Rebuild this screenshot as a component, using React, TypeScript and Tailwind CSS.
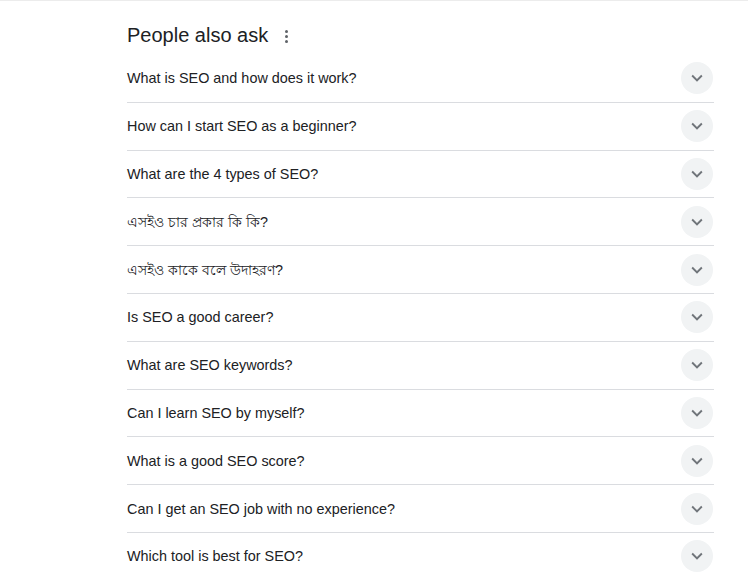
import React from "react";

const questions = [
  "What is SEO and how does it work?",
  "How can I start SEO as a beginner?",
  "What are the 4 types of SEO?",
  "এসইও চার প্রকার কি কি?",
  "এসইও কাকে বলে উদাহরণ?",
  "Is SEO a good career?",
  "What are SEO keywords?",
  "Can I learn SEO by myself?",
  "What is a good SEO score?",
  "Can I get an SEO job with no experience?",
  "Which tool is best for SEO?",
];

function Chevron() {
  return (
    <svg width="22" height="22" viewBox="0 0 24 24" fill="#70757a">
      <path d="M16.59 8.59L12 13.17 7.41 8.59 6 10l6 6 6-6z" />
    </svg>
  );
}

export default function App() {
  return (
    <div
      className="w-[748px] h-[576px] overflow-hidden bg-white border-t border-[#ececec]"
      style={{ fontFamily: '"Liberation Sans", Arial, "Noto Sans", sans-serif' }}
    >
      <div className="ml-[127px] w-[587px]">
        <div className="h-[54px] flex items-start pt-[21px]">
          <span className="text-[20px] leading-[26px] text-[#202124]">
            People also ask
          </span>
          <span className="ml-[17px] mt-[8px] flex flex-col gap-[2px] items-center">
            <span className="w-[3px] h-[3px] rounded-full bg-[#5f6368]" />
            <span className="w-[3px] h-[3px] rounded-full bg-[#5f6368]" />
            <span className="w-[3px] h-[3px] rounded-full bg-[#5f6368]" />
          </span>
        </div>
        <div className="flex flex-col">
          {questions.map((q, i) => (
            <div
              key={i}
              className="h-[47.8px] flex items-center justify-between border-b border-[#dadce0]"
            >
              <span className="text-[14.4px] leading-[20px] text-[#202124]">{q}</span>
              <span className="w-[32px] h-[32px] rounded-full bg-[#f1f3f4] flex items-center justify-center mr-[1px]">
                <Chevron />
              </span>
            </div>
          ))}
        </div>
      </div>
    </div>
  );
}
